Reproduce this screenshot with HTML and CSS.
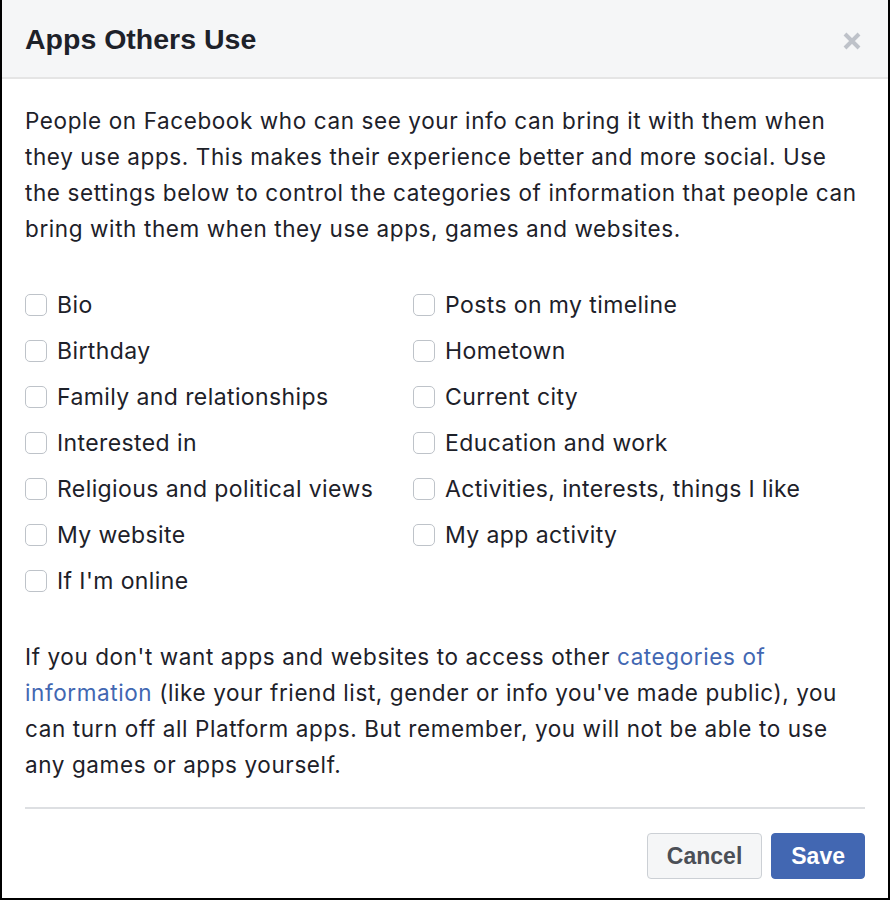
FILE: index.html
```html
<!DOCTYPE html>
<html>
<head>
<meta charset="utf-8">
<link rel="stylesheet" href="styles.css">
</head>
<body>
<div class="dialog">
  <div class="header">
    <h1 class="title">Apps Others Use</h1>
    <span class="close" aria-label="Close">
      <svg width="18" height="18" viewBox="0 0 18 18"><path d="M2 2 L16 16 M16 2 L2 16" stroke="#bec2c9" stroke-width="4" stroke-linecap="butt"/></svg>
    </span>
  </div>
  <div class="body">
    <p class="intro">People on Facebook who can see your info can bring it with them when they use apps. This makes their experience better and more social. Use the settings below to control the categories of information that people can bring with them when they use apps, games and websites.</p>
    <div class="options">
      <div class="col">
        <label class="opt"><span class="box"></span>Bio</label>
        <label class="opt"><span class="box"></span>Birthday</label>
        <label class="opt"><span class="box"></span>Family and relationships</label>
        <label class="opt"><span class="box"></span>Interested in</label>
        <label class="opt"><span class="box"></span>Religious and political views</label>
        <label class="opt"><span class="box"></span>My website</label>
        <label class="opt"><span class="box"></span>If I'm online</label>
      </div>
      <div class="col">
        <label class="opt"><span class="box"></span>Posts on my timeline</label>
        <label class="opt"><span class="box"></span>Hometown</label>
        <label class="opt"><span class="box"></span>Current city</label>
        <label class="opt"><span class="box"></span>Education and work</label>
        <label class="opt"><span class="box"></span>Activities, interests, things I like</label>
        <label class="opt"><span class="box"></span>My app activity</label>
      </div>
    </div>
    <p class="outro">If you don't want apps and websites to access other <a href="#" class="link">categories of information</a> (like your friend list, gender or info you've made public), you can turn off all Platform apps. But remember, you will not be able to use any games or apps yourself.</p>
  </div>
  <div class="footer">
    <button class="btn btn-cancel">Cancel</button>
    <button class="btn btn-save">Save</button>
  </div>
</div>
</body>
</html>
```
FILE: styles.css
```css
html, body {
  margin: 0;
  padding: 0;
  background: #fff;
}
body {
  font-family: Inter, "Liberation Sans", Arial, sans-serif;
  color: #1d2129;
}
.dialog {
  width: 886px;
  height: 898px;
  border-left: 2px solid #000;
  border-right: 2px solid #000;
  border-bottom: 2px solid #000;
  display: flex;
  flex-direction: column;
  background: #fff;
}
.header {
  height: 77px;
  background: #f5f6f7;
  border-bottom: 2px solid #e5e5e5;
  display: flex;
  align-items: center;
  justify-content: space-between;
  padding: 0 27px 0 23px;
  flex: none;
}
.title {
  margin: 0;
  font-family: "Liberation Sans", Arial, sans-serif;
  font-size: 28.5px;
  font-weight: bold;
  color: #1d2129;
  padding-top: 2px;
}
.close {
  display: flex;
  width: 18px;
  height: 18px;
  margin-top: 4px;
}
.body {
  padding: 0 23px;
  flex: 1;
}
.intro, .outro {
  margin: 0;
  font-size: 22.5px;
  letter-spacing: 0.6px;
  line-height: 36px;
  color: #1d2129;
}
.intro {
  padding-top: 24px;
}
.options {
  display: flex;
  padding-top: 35px;
}
.col {
  display: flex;
  flex-direction: column;
}
.col:first-child {
  width: 388px;
}
.opt {
  display: flex;
  align-items: center;
  height: 46px;
  font-size: 23px;
  letter-spacing: 0.4px;
  color: #1d2129;
}
.box {
  width: 20px;
  height: 20px;
  border: 1px solid #bec3c9;
  border-radius: 5px;
  background: #fff;
  margin-right: 10px;
  flex: none;
}
.outro {
  padding-top: 35px;
  padding-bottom: 24px;
  border-bottom: 2px solid #dddfe2;
}
.link {
  color: #4267b2;
  text-decoration: none;
}
.footer {
  display: flex;
  justify-content: flex-end;
  gap: 9px;
  padding: 0 23px 19px;
  flex: none;
}
.btn {
  height: 46px;
  font-family: "Liberation Sans", Arial, sans-serif;
  font-size: 23px;
  font-weight: bold;
  border-radius: 4px;
  padding: 0 19px;
}
.btn-cancel {
  background: #f5f6f7;
  border: 1px solid #ccd0d5;
  color: #4b4f56;
}
.btn-save {
  background: #4267b2;
  border: 1px solid #4267b2;
  color: #fff;
}
```
